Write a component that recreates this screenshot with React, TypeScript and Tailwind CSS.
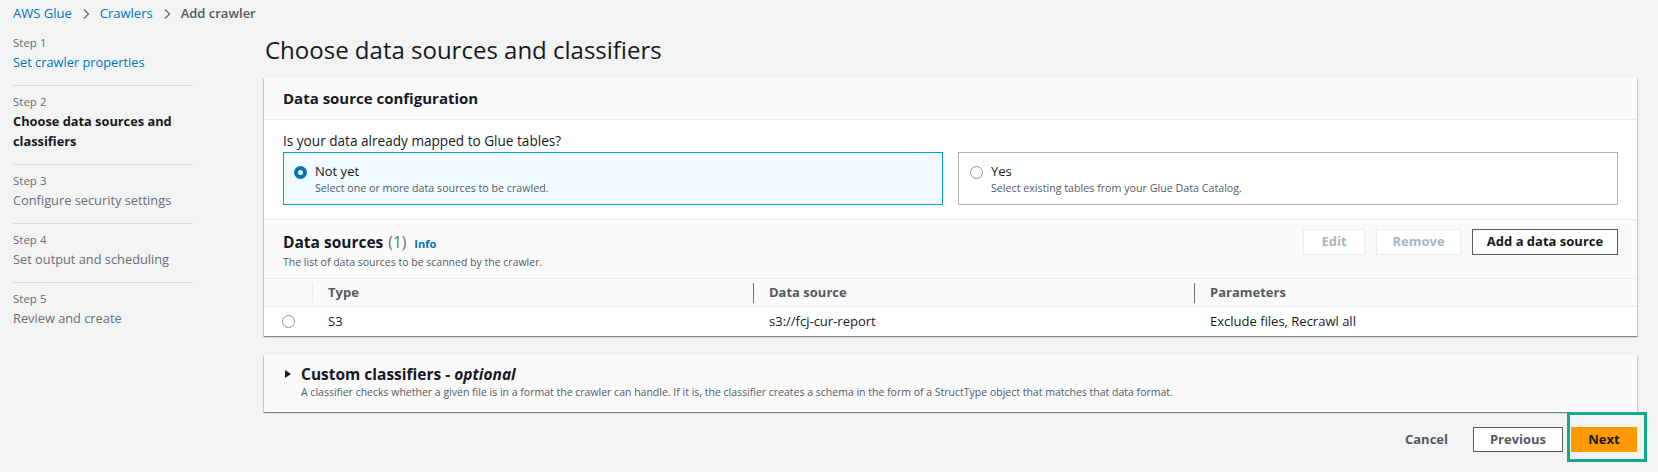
import React from 'react';

const font = { fontFamily: '"Open Sans", "Liberation Sans", sans-serif' };

const steps = [
  { label: 'Step 1', title: 'Set crawler properties', state: 'done' },
  { label: 'Step 2', title: 'Choose data sources and classifiers', state: 'active' },
  { label: 'Step 3', title: 'Configure security settings', state: 'todo' },
  { label: 'Step 4', title: 'Set output and scheduling', state: 'todo' },
  { label: 'Step 5', title: 'Review and create', state: 'todo' },
];

const Chevron: React.FC = () => (
  <svg width="10" height="12" viewBox="0 0 10 12" className="mx-[9px]">
    <path d="M3 1.5 L7.5 6 L3 10.5" fill="none" stroke="#687078" strokeWidth="1.4" />
  </svg>
);

const Radio: React.FC<{ checked?: boolean }> = ({ checked }) =>
  checked ? (
    <span className="block w-[13px] h-[13px] rounded-full border-[4px] border-[#0073bb] bg-white shrink-0" />
  ) : (
    <span className="block w-[13px] h-[13px] rounded-full border border-[#879596] bg-white shrink-0" />
  );

const cardShadow =
  'shadow-[0_1px_1px_0_rgba(0,28,36,0.3),1px_1px_1px_0_rgba(0,28,36,0.15),-1px_1px_1px_0_rgba(0,28,36,0.15)]';

export default function App() {
  return (
    <div className="relative w-[1658px] h-[472px] bg-[#f2f3f3] overflow-hidden text-[#16191f]" style={font}>
      {/* breadcrumb */}
      <div className="h-[27px] pl-[13px] flex items-center text-[13px]">
        <span className="text-[#0073bb]">AWS Glue</span>
        <Chevron />
        <span className="text-[#0073bb]">Crawlers</span>
        <Chevron />
        <span className="text-[#545b64] font-semibold">Add crawler</span>
      </div>

      <div className="flex">
        {/* wizard steps */}
        <div className="ml-[13px] w-[180px] shrink-0">
          {steps.map((s, i) => (
            <div
              key={s.label}
              className={`pt-[7px] pb-[13px] ${i < steps.length - 1 ? 'border-b border-[#d5dbdb]' : ''}`}
            >
              <div className="text-[11.5px] leading-[18px] text-[#687078]">{s.label}</div>
              <div
                className={`text-[12.8px] leading-[20px] ${
                  s.state === 'done'
                    ? 'text-[#0073bb]'
                    : s.state === 'active'
                    ? 'text-[#16191f] font-bold'
                    : 'text-[#687078]'
                }`}
              >
                {s.title}
              </div>
            </div>
          ))}
        </div>

        {/* main */}
        <div className="ml-[71px] w-[1373px]">
          <h1 className="mt-[8px] pl-px text-[24px] leading-[30px] font-normal text-[#16191f]">
            Choose data sources and classifiers
          </h1>

          {/* card: data source configuration */}
          <div className={`mt-[13px] bg-white ${cardShadow}`}>
            <div className="h-[42px] bg-[#fafafa] border-b border-[#eaeded] flex items-center pl-[19px]">
              <span className="text-[15px] font-bold">Data source configuration</span>
            </div>
            <div className="px-[19px] pt-[11px] pb-[14px]">
              <div className="text-[13.6px] leading-[20px] mb-[1px]">Is your data already mapped to Glue tables?</div>
              <div className="grid grid-cols-2 gap-[15px]">
                <div className="h-[53px] border border-[#00a1c9] bg-[#f1faff] flex items-start pl-[10px] pt-[9px]">
                  <div className="mt-[4px]">
                    <Radio checked />
                  </div>
                  <div className="ml-[8px]">
                    <div className="text-[13px] leading-[18px]">Not yet</div>
                    <div className="text-[10.7px] leading-[16px] text-[#545b64]">
                      Select one or more data sources to be crawled.
                    </div>
                  </div>
                </div>
                <div className="h-[53px] border border-[#aab7b8] bg-white flex items-start pl-[11px] pt-[9px]">
                  <div className="mt-[4px]">
                    <Radio />
                  </div>
                  <div className="ml-[8px]">
                    <div className="text-[13px] leading-[18px]">Yes</div>
                    <div className="text-[10.7px] leading-[16px] text-[#545b64]">
                      Select existing tables from your Glue Data Catalog.
                    </div>
                  </div>
                </div>
              </div>
            </div>

            {/* data sources */}
            <div className="h-[59px] bg-[#fafafa] border-t border-[#eaeded] flex items-start justify-between pl-[19px] pr-[19px]">
              <div className="pt-[11px]">
                <div className="flex items-baseline leading-[22px]">
                  <span className="text-[15.5px] font-bold">Data sources</span>
                  <span className="text-[15.5px] text-[#687078] ml-[5px]">(1)</span>
                  <span className="text-[11px] font-bold text-[#0073bb] ml-[8px]">Info</span>
                </div>
                <div className="text-[10.5px] leading-[15px] text-[#545b64]">
                  The list of data sources to be scanned by the crawler.
                </div>
              </div>
              <div className="flex gap-[11px] pt-[9px]">
                <div className="w-[62px] h-[26px] border border-[#eaeded] bg-white text-[13px] font-bold text-[#aab7b8] flex items-center justify-center">
                  Edit
                </div>
                <div className="w-[85px] h-[26px] border border-[#eaeded] bg-white text-[13px] font-bold text-[#aab7b8] flex items-center justify-center">
                  Remove
                </div>
                <div className="w-[146px] h-[26px] border border-[#545b64] bg-white text-[13px] font-bold text-[#16191f] flex items-center justify-center">
                  Add a data source
                </div>
              </div>
            </div>

            {/* table */}
            <div className="grid grid-cols-[48px_441px_441px_1fr] h-[29px] bg-[#fafafa] border-t border-b border-[#eaeded] items-center text-[13px] font-bold text-[#545b64]">
              <div className="h-full" />
              <div className="h-[20px] border-l border-[#eaeded] pl-[15px] flex items-center">Type</div>
              <div className="h-[20px] border-l border-[#687078] pl-[15px] flex items-center">Data source</div>
              <div className="h-[20px] border-l border-[#687078] pl-[15px] flex items-center">Parameters</div>
            </div>
            <div className="grid grid-cols-[48px_441px_441px_1fr] h-[29px] items-center text-[13px] text-[#16191f]">
              <div className="pl-[18px] flex items-center">
                <Radio />
              </div>
              <div className="pl-[16px]">S3</div>
              <div className="pl-[16px]">s3://fcj-cur-report</div>
              <div className="pl-[16px]">Exclude files, Recrawl all</div>
            </div>
          </div>

          {/* custom classifiers */}
          <div className={`mt-[19px] h-[57px] bg-[#fafafa] ${cardShadow} pl-[19px] pt-[9px]`}>
            <div className="flex items-center leading-[20px]">
              <svg width="8" height="10" viewBox="0 0 8 10" className="mr-[9px] ml-[1px]">
                <path d="M1 1 L7 5 L1 9 Z" fill="#16191f" />
              </svg>
              <span className="text-[15.5px] font-bold">
                Custom classifiers - <i>optional</i>
              </span>
            </div>
            <div className="pl-[18px] text-[10.5px] leading-[16px] text-[#545b64]">
              A classifier checks whether a given file is in a format the crawler can handle. If it is, the classifier
              creates a schema in the form of a StructType object that matches that data format.
            </div>
          </div>

          {/* footer actions */}
          <div className="mt-[15px] flex justify-end items-center">
            <div className="text-[13px] font-bold text-[#545b64] mr-[25px]">Cancel</div>
            <div className="w-[90px] h-[25px] border border-[#545b64] bg-white text-[13px] font-bold text-[#545b64] flex items-center justify-center">
              Previous
            </div>
            <div className="ml-[8px] w-[66px] h-[25px] bg-[#ff9900] text-[13px] font-bold text-[#16191f] flex items-center justify-center">
              Next
            </div>
          </div>
        </div>
      </div>

      {/* highlight annotation */}
      <div className="absolute left-[1567px] top-[412px] w-[80px] h-[50px] border-[3px] border-[#14a98b]" />
    </div>
  );
}
